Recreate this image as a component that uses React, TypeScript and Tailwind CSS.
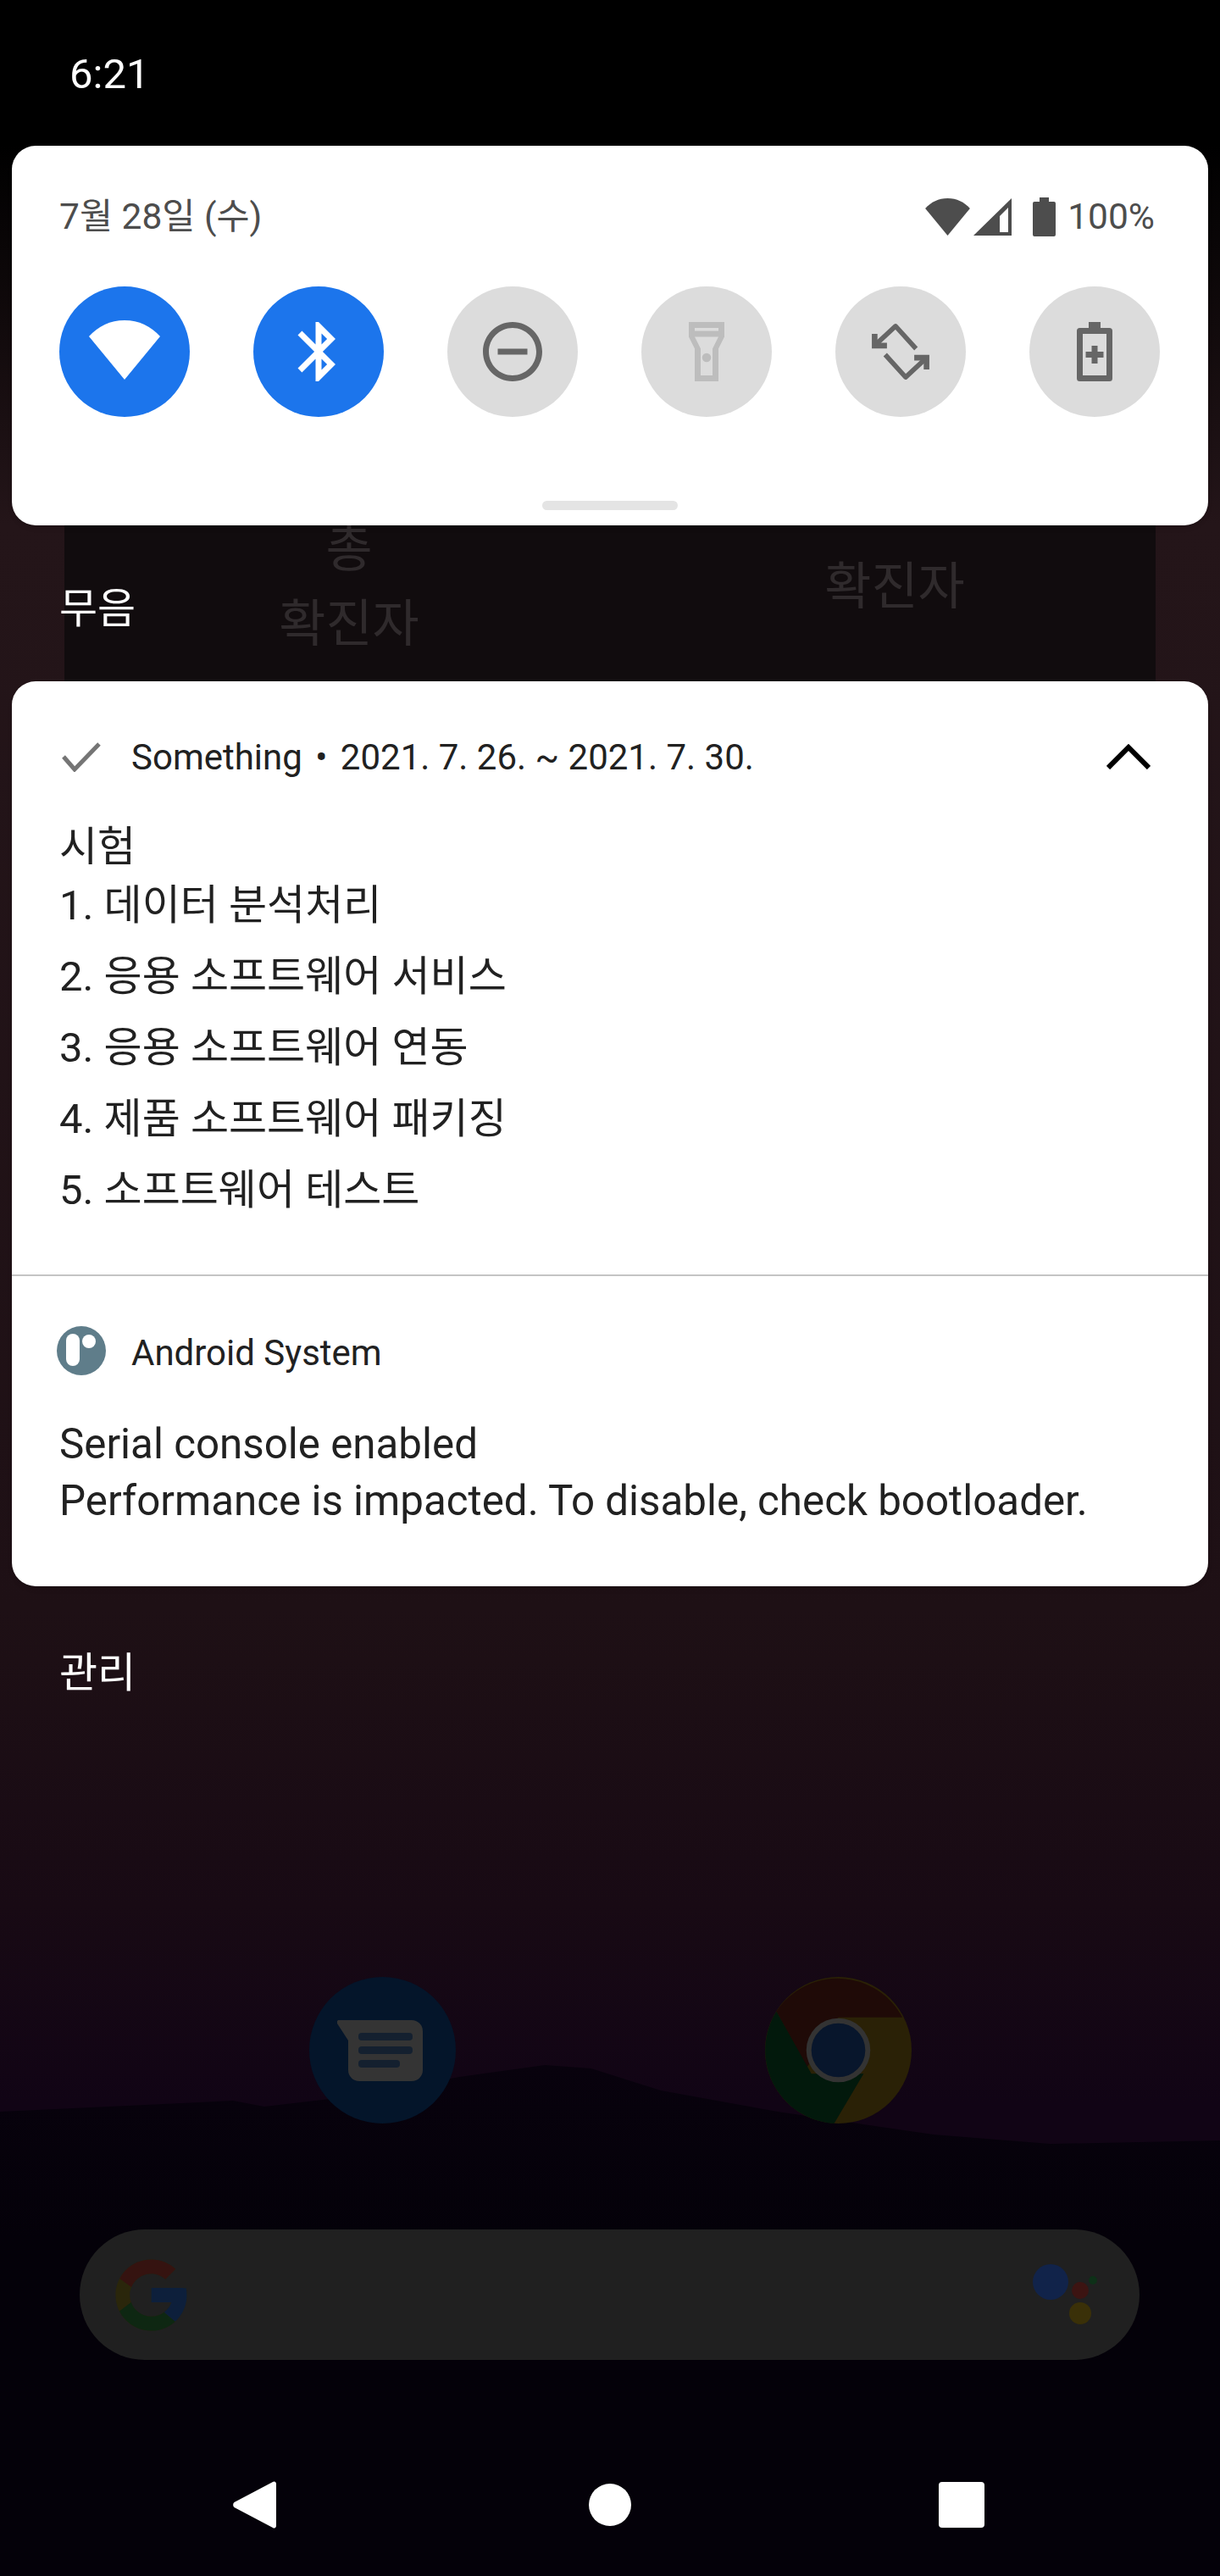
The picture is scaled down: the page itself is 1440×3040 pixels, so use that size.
const listItems = [
  "1. 데이터 분석처리",
  "2. 응용 소프트웨어 서비스",
  "3. 응용 소프트웨어 연동",
  "4. 제품 소프트웨어 패키징",
  "5. 소프트웨어 테스트",
];

const WifiIcon = ({ className }: { className: string }) => (
  <svg viewBox="0 0 84 70" className={className} fill="currentColor">
    <path d="M0 19C11 7 25 0 42 0s31 7 42 19L42 70z" />
  </svg>
);

const QsButton = ({ active, children }: { active?: boolean; children: React.ReactNode }) => (
  <div
    className={
      active
        ? "flex h-[154px] w-[154px] items-center justify-center rounded-full bg-[#1c75ec] text-white"
        : "flex h-[154px] w-[154px] items-center justify-center rounded-full bg-[#dcdcdc] text-[#666666]"
    }
  >
    {children}
  </div>
);

const QuickSettings = () => (
  <div className="mt-[52px] flex gap-[75px] pl-[56px]">
    <QsButton active>
      <WifiIcon className="mt-[-5px] h-[70px] w-[84px]" />
    </QsButton>
    <QsButton active>
      <svg viewBox="0 0 24 24" className="h-[84px] w-[84px]" fill="currentColor">
        <path d="M17.71 7.71L12 2h-1v7.59L6.41 5 5 6.41 10.59 12 5 17.59 6.41 19 11 14.41V22h1l5.71-5.71-4.3-4.29 4.3-4.29zM13 5.83l1.88 1.88L13 9.59V5.83zm1.88 10.46L13 18.17v-3.76l1.88 1.88z" />
      </svg>
    </QsButton>
    <QsButton>
      <svg viewBox="0 0 24 24" className="h-[84px] w-[84px]" fill="currentColor">
        <path d="M7 11h10v2H7zm5-9C6.48 2 2 6.48 2 12s4.48 10 10 10 10-4.48 10-10S17.52 2 12 2zm0 18c-4.41 0-8-3.59-8-8s3.59-8 8-8 8 3.59 8 8-3.59 8-8 8z" />
      </svg>
    </QsButton>
    <QsButton>
      <svg viewBox="0 0 24 24" className="h-[84px] w-[84px] text-[#bdbdbd]" fill="currentColor">
        <path
          fillRule="evenodd"
          d="M6 2h12v5l-2 4v11H8V11L6 7zM8 4v1h8V4zM8 7l2 4v9h4v-9l2-4z"
        />
        <circle cx="12" cy="14" r="1.5" />
      </svg>
    </QsButton>
    <QsButton>
      <svg viewBox="0 0 24 24" className="h-[84px] w-[84px]" fill="currentColor">
        <g>
          <path d="M3.600 9.600L10.300 3.400L17.200 11" fill="none" stroke="currentColor" strokeWidth="1.6" strokeLinejoin="round" />
          <path d="M2.300 6h1.900v3h3.200v1.900H2.300z" />
        </g>
        <g transform="rotate(180 12 12)">
          <path d="M3.600 9.600L10.300 3.400L17.200 11" fill="none" stroke="currentColor" strokeWidth="1.6" strokeLinejoin="round" />
          <path d="M2.300 6h1.900v3h3.200v1.900H2.300z" />
        </g>
      </svg>
    </QsButton>
    <QsButton>
      <svg viewBox="0 0 24 24" className="h-[84px] w-[84px]" fill="currentColor">
        <path
          fillRule="evenodd"
          d="M10 2h4v2h3a1 1 0 0 1 1 1v16a1 1 0 0 1-1 1H7a1 1 0 0 1-1-1V5a1 1 0 0 1 1-1h3zM8 6v14h8V6z"
        />
        <path d="M11 10h2v2h2v2h-2v2h-2v-2H9v-2h2z" />
      </svg>
    </QsButton>
  </div>
);

const HomeScreen = () => (
  <>
    <div className="mt-[330px] flex gap-[365px] pl-[365px]">
      <div className="flex h-[173px] w-[173px] items-center justify-center rounded-full bg-[#04152a]">
        <svg viewBox="0 0 102 72" className="-ml-[6px] h-[72px] w-[102px]">
          <path d="M4 0h84a13 13 0 0 1 13 13v46a13 13 0 0 1-13 13H26a13 13 0 0 1-13-13V24L0 4a3 3 0 0 1 4-4z" fill="#343434" />
          <rect x="25" y="15" width="64" height="9" rx="4" fill="#14202f" />
          <rect x="25" y="31" width="64" height="9" rx="4" fill="#14202f" />
          <rect x="25" y="47" width="49" height="9" rx="4" fill="#14202f" />
        </svg>
      </div>
      <svg viewBox="0 0 174 174" className="h-[173px] w-[173px]">
        <circle cx="87" cy="87" r="87" fill="#2a2106" />
        <path d="M13.500 41A87 87 0 0 1 163 48H87L50 107z" fill="#1f0a07" />
        <path d="M13.500 41L55 115H117L82 174A87 87 0 0 1 13.500 41z" fill="#02190c" />
        <circle cx="87" cy="87" r="38" fill="#333333" />
        <circle cx="87" cy="87" r="32" fill="#08162c" />
      </svg>
    </div>

    <div className="mt-[125px] ml-[94px] flex h-[154px] w-[1251px] items-center justify-between rounded-full bg-[#202020] pr-[49px] pl-[34px]">
      <svg viewBox="0 0 48 48" className="h-[101px] w-[101px]">
        <path fill="#2a260b" d="M43.611,20.083H42V20H24v8h11.303c-1.649,4.657-6.08,8-11.303,8c-6.627,0-12-5.373-12-12c0-6.627,5.373-12,12-12c3.059,0,5.842,1.154,7.961,3.039l5.657-5.657C34.046,6.053,29.268,4,24,4C12.955,4,4,12.955,4,24c0,11.045,8.955,20,20,20c11.045,0,20-8.955,20-20C44,22.659,43.862,21.35,43.611,20.083z" />
        <path fill="#351310" d="M6.306,14.691l6.571,4.819C14.655,15.108,18.961,12,24,12c3.059,0,5.842,1.154,7.961,3.039l5.657-5.657C34.046,6.053,29.268,4,24,4C16.318,4,9.656,8.337,6.306,14.691z" />
        <path fill="#0e2712" d="M24,44c5.166,0,9.86-1.977,13.409-5.192l-6.19-5.238C29.211,35.091,26.715,36,24,36c-5.202,0-9.619-3.317-11.283-7.946l-6.522,5.025C9.505,39.556,16.227,44,24,44z" />
        <path fill="#0d1f3b" d="M43.611,20.083H42V20H24v8h11.303c-0.792,2.237-2.231,4.166-4.087,5.571c0.001-0.001,0.002-0.001,0.003-0.002l6.19,5.238C36.971,39.205,44,34,44,24C44,22.659,43.862,21.35,43.611,20.083z" />
      </svg>
      <svg viewBox="0 0 77 72" className="h-[72px] w-[77px]">
        <circle cx="21" cy="21" r="21" fill="#11234a" />
        <circle cx="56" cy="31" r="10" fill="#3c1412" />
        <circle cx="71" cy="19" r="5" fill="#0e3018" />
        <circle cx="56" cy="58" r="13" fill="#3a3008" />
      </svg>
    </div>

    <div className="mt-[143px] flex h-[56px] items-center">
      <svg viewBox="0 0 51 56" className="ml-[275px] h-[56px] w-[51px]" fill="white">
        <path d="M47 1a2.500 2.500 0 0 1 4 2v50a2.500 2.500 0 0 1-4 2L1.500 31a4 4 0 0 1 0-6z" />
      </svg>
      <div className="ml-[369px] h-[50px] w-[50px] rounded-full bg-white" />
      <div className="ml-[363px] h-[54px] w-[54px] rounded-[4px] bg-white" />
    </div>
  </>
);

export default function App() {
  return (
    <div className="relative flex h-[3040px] w-[1440px] flex-col overflow-hidden bg-[linear-gradient(#000000_172px,#241519_620px,#1e1015_1900px,#180a14_2250px,#110415_2480px)] font-['Roboto','Noto_Sans_CJK_KR',sans-serif]">
      {/* wallpaper hills */}
      <svg viewBox="0 0 1440 3040" className="absolute inset-0 h-[3040px] w-[1440px]">
        <defs>
          <linearGradient id="hills" x1="0" y1="2437" x2="0" y2="2640" gradientUnits="userSpaceOnUse">
            <stop offset="0" stopColor="#08020d" />
            <stop offset="1" stopColor="#040109" />
          </linearGradient>
        </defs>
        <path
          d="M0 2492L275 2479L312 2486L432 2472L542 2451L643 2437L698 2441L780 2467L918 2492L1102 2519L1240 2530L1440 2526V3040H0z"
          fill="url(#hills)"
        />
      </svg>

      <div className="relative flex h-[172px] items-center pt-[3px] pl-[82px] text-[49px] text-white">6:21</div>

      <div className="relative z-10 mx-[14px] flex h-[448px] flex-col rounded-[28px] bg-white pt-[54px] shadow-md">
        <div className="flex h-[60px] items-center justify-between pr-[63px] pl-[56px] text-[42.5px] text-[#4d4d4d]">
          <span>7월 28일 (수)</span>
          <div className="flex items-center">
            <WifiIcon className="h-[44px] w-[53px]" />
            <svg viewBox="0 0 45 44" className="ml-[4px] h-[44px] w-[45px]" fill="currentColor">
              <path fillRule="evenodd" d="M45 0V44H0zM41 11L31 21V40H41z" />
            </svg>
            <svg viewBox="0 0 27 46" className="ml-[25px] h-[46px] w-[27px]" fill="currentColor">
              <path d="M8 0h11v5h6a2 2 0 0 1 2 2v37a2 2 0 0 1-2 2H2a2 2 0 0 1-2-2V7a2 2 0 0 1 2-2h6z" />
            </svg>
            <span className="ml-[14px]">100%</span>
          </div>
        </div>
        <QuickSettings />
        <div className="mt-auto mb-[18px] h-[11px] w-[160px] self-center rounded-full bg-[#e4e4e4]" />
      </div>

      {/* dimmed app behind the shade */}
      <div className="relative mx-[76px] grid h-[184px] grid-cols-[644px_644px] overflow-hidden bg-[#110c0e] pl-[14px] text-center text-[60px] leading-[88px] text-[#2f2a2c]">
        <div className="-mt-[15px]">
          <div>총</div>
          <div>확진자</div>
        </div>
        <div className="mt-[29px]">확진자</div>
      </div>
      <div className="absolute top-[689px] left-[70px] text-[49px] leading-[60px] text-white">무음</div>

      <div className="relative z-10 mx-[14px] h-[1068px] rounded-[28px] bg-white text-[#212121] shadow-md">
        <div className="flex h-[702px] flex-col border-b-2 border-[#c4c4c4] px-[56px] pt-[59px]">
          <div className="flex h-[60px] items-center">
            <svg viewBox="0 0 46 35" className="ml-[3px] h-[35px] w-[46px] shrink-0" fill="none" stroke="#757575" strokeWidth="5">
              <path d="M2 17L15 32L44 2" />
            </svg>
            <span className="ml-[36px] text-[42px]">
              Something<span className="inline-block w-[45px] text-center">•</span>2021. 7. 26. ~ 2021. 7. 30.
            </span>
            <svg viewBox="0 0 52 30" className="mr-[12px] ml-auto h-[30px] w-[52px]" fill="none" stroke="#000000" strokeWidth="6">
              <path d="M2 28L26 4L50 28" />
            </svg>
          </div>
          <div className="mt-[42px] text-[49px] leading-[69px]">시험</div>
          <div className="flex flex-col gap-[15px] text-[49px] leading-[69px]">
            {listItems.map((item) => (
              <div key={item}>{item}</div>
            ))}
          </div>
        </div>
        <div className="px-[56px] pt-[59px]">
          <div className="flex h-[58px] items-center">
            <svg viewBox="0 0 58 58" className="-ml-[3px] h-[58px] w-[58px] shrink-0">
              <circle cx="29" cy="29" r="29" fill="#5f7d8a" />
              <rect x="11" y="9" width="16" height="38" rx="8" fill="white" />
              <circle cx="38" cy="18" r="8" fill="white" />
            </svg>
            <span className="mt-[5px] ml-[30px] text-[42px]">Android System</span>
          </div>
          <div className="mt-[48px] text-[49.3px] leading-[67px]">
            <div>Serial console enabled</div>
            <div>Performance is impacted. To disable, check bootloader.</div>
          </div>
        </div>
      </div>

      <div className="relative mt-[73px] pl-[70px] text-[49px] leading-[60px] text-white">관리</div>

      <div className="relative -mt-[2px] flex flex-col">
        <HomeScreen />
      </div>
    </div>
  );
}
